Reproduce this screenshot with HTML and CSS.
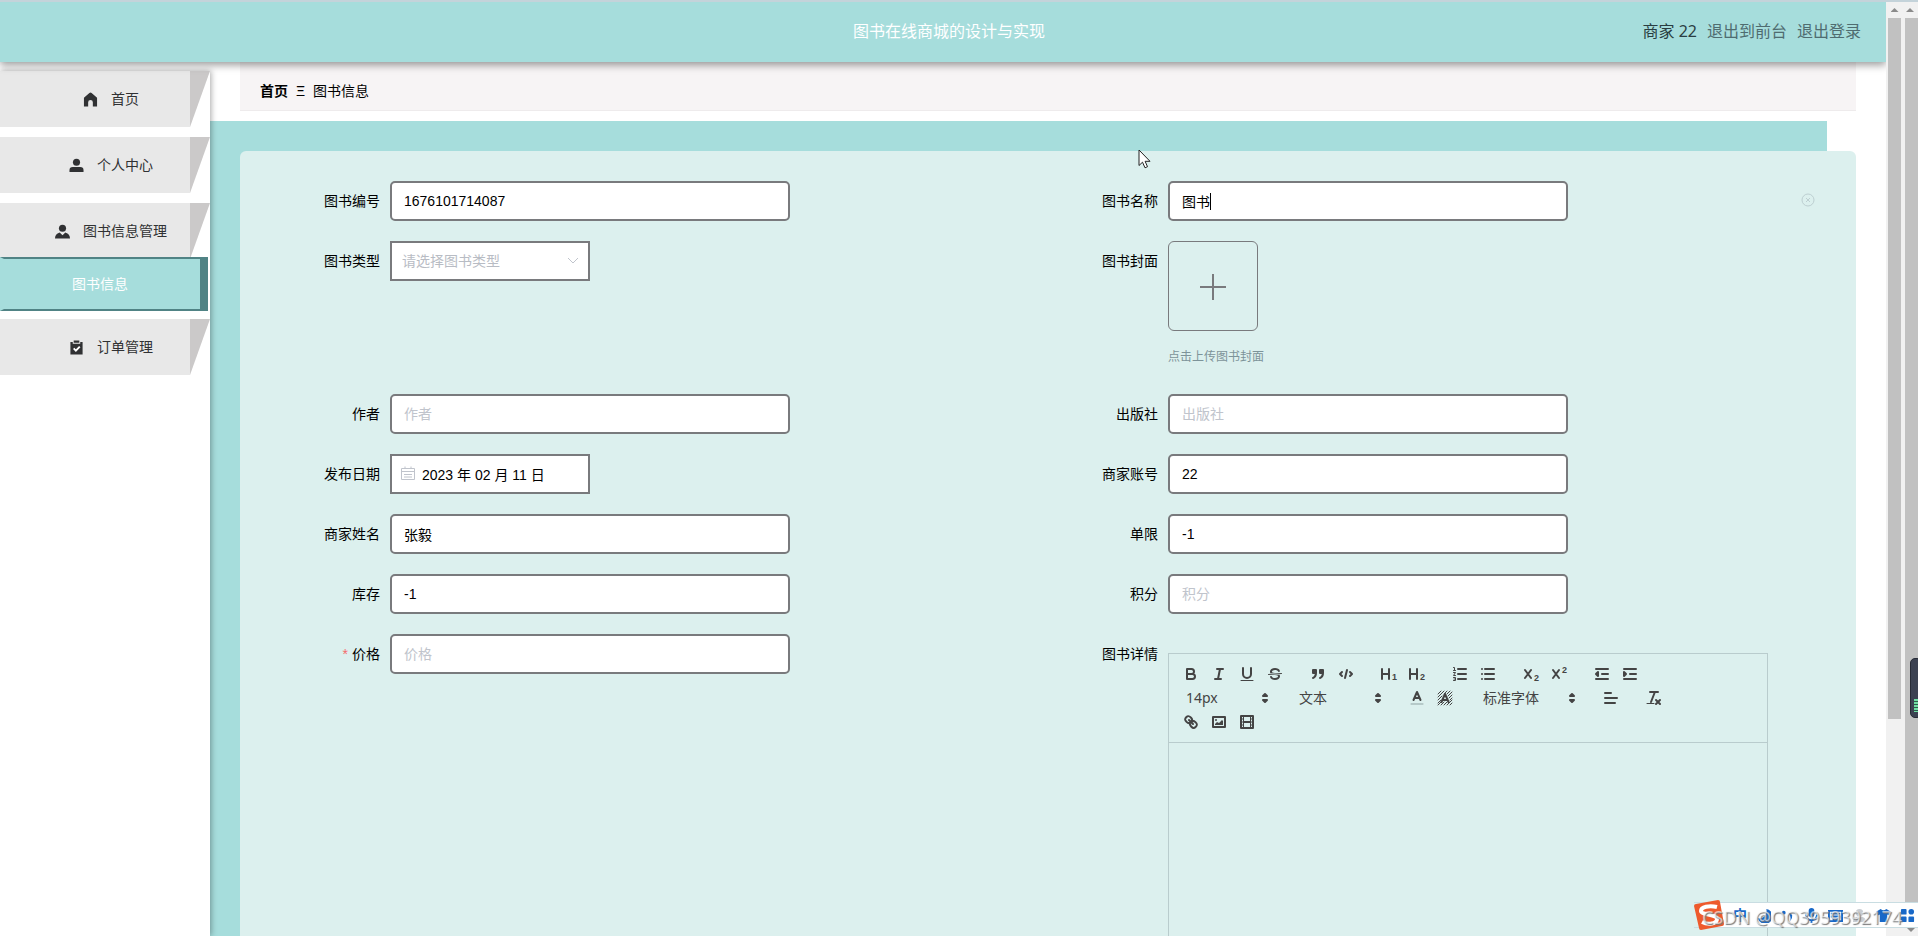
FILE: index.html
```html
<!DOCTYPE html>
<html lang="zh-CN">
<head>
<meta charset="utf-8">
<title>图书在线商城的设计与实现</title>
<link rel="stylesheet" href="styles.css">
</head>
<body>
<div class="app">
  <header class="topbar">
    <h1 class="topbar-title">图书在线商城的设计与实现</h1>
    <div class="topbar-user">
      <span class="user-name">商家 22</span>
      <a class="user-link" href="#">退出到前台</a>
      <a class="user-link" href="#">退出登录</a>
    </div>
  </header>
  <div class="body">
    <nav class="sidebar">
      <a class="menu-item" href="#"><span class="menu-label"><svg class="menu-icon" viewBox="0 0 16 16"><path d="M8 .5q-.6 0-1.200.5L1 6v9.500h4.500V11a2.500 2.500 0 0 1 5 0v4.500H15V6L9.200 1Q8.600.5 8 .5z"/></svg>首页</span></a>
      <a class="menu-item" href="#"><span class="menu-label"><svg class="menu-icon" viewBox="0 0 16 16"><circle cx="8" cy="4.500" r="3.800"/><path d="M.5 15v-2A3.500 3.500 0 0 1 4 9.500h8a3.500 3.500 0 0 1 3.500 3.500v2z"/></svg>个人中心</span></a>
      <div class="menu-group">
        <a class="menu-item" href="#"><span class="menu-label"><svg class="menu-icon" viewBox="0 0 16 16"><circle cx="8" cy="4.500" r="3.800"/><path d="M0 15.500c0-3.500 1.500-5.500 5-6.500l3 3 3-3c3.500 1 5 3 5 6.500z"/></svg>图书信息管理</span></a>
        <a class="submenu-item" href="#">图书信息</a>
      </div>
      <a class="menu-item" href="#"><span class="menu-label"><svg class="menu-icon" viewBox="0 0 16 16"><path d="M1.500 2H4v2h8V2h2.500v13.500h-13z"/><path d="M5 .5h6V3H5z"/><path class="icon-check" d="m5 9 2.300 2.300L11.500 7"/></svg>订单管理</span></a>
    </nav>
    <main class="main">
      <div class="crumbs"><a class="crumb-home" href="#">首页</a><span>Ξ</span><span>图书信息</span></div>
      <div class="backdrop">
        <form class="panel">
          <div class="field"><label for="no">图书编号</label><input class="box" id="no" value="1676101714087"></div>
          <div class="field"><label for="name">图书名称</label><div class="caret-wrap"><input class="box" id="name" value="图书"><span class="caret"></span></div>
            <svg class="clear-icon" viewBox="0 0 14 14"><circle cx="7" cy="7" r="6"/><path d="m5 5 4 4M9 5 5 9"/></svg>
          </div>
          <div class="field"><label for="kind">图书类型</label>
            <div class="select-wrap"><select class="box box-short box-select" id="kind"><option>请选择图书类型</option></select>
            <svg class="chevron" viewBox="0 0 12 12"><path d="m1 3 5 5 5-5"/></svg></div>
          </div>
          <div class="field"><label for="cover">图书封面</label>
            <div class="cover"><button class="cover-add" id="cover" type="button" aria-label="图书封面"><svg class="plus" viewBox="0 0 28 28"><path d="M14 1v26M1 14h26"/></svg></button><p class="cover-tip">点击上传图书封面</p></div>
          </div>
          <div class="field"><label for="author">作者</label><input class="box" id="author" placeholder="作者"></div>
          <div class="field"><label for="press">出版社</label><input class="box" id="press" placeholder="出版社"></div>
          <div class="field"><label for="date">发布日期</label>
            <div class="select-wrap"><input class="box box-short box-date" id="date" value="2023 年 02 月 11 日">
            <svg class="calendar" viewBox="0 0 14 14"><path d="M.5 2.500h13v11H.5zM.5 5.500h13M4 .5V3M10 .5V3M3 8.500h8M3 11h8"/></svg></div>
          </div>
          <div class="field"><label for="account">商家账号</label><input class="box" id="account" value="22"></div>
          <div class="field"><label for="owner">商家姓名</label><input class="box" id="owner" value="张毅"></div>
          <div class="field"><label for="limit">单限</label><input class="box" id="limit" value="-1"></div>
          <div class="field"><label for="stock">库存</label><input class="box" id="stock" value="-1"></div>
          <div class="field"><label for="points">积分</label><input class="box" id="points" placeholder="积分"></div>
          <div class="field"><label for="price"><span class="required">*</span>价格</label><input class="box" id="price" placeholder="价格"></div>
          <div class="field"><label for="detail">图书详情</label>
            <div class="editor">
              <div class="toolbar">
                <div class="formats">
                  <button type="button" aria-label="粗体"><svg viewBox="0 0 18 18"><path d="M5 4h4.500a2.500 2.500 0 0 1 0 5H5zM5 9h5.500a2.500 2.500 0 0 1 0 5H5z"/></svg></button>
                  <button type="button" aria-label="斜体"><svg viewBox="0 0 18 18"><path d="M7 4h6M5 14h6M8 14l2-10"/></svg></button>
                  <button type="button" aria-label="下划线"><svg viewBox="0 0 18 18"><path d="M5 3v6a4 4 0 0 0 8 0V3"/><path class="thin" d="M3 15.500h12"/></svg></button>
                  <button type="button" aria-label="删除线"><svg viewBox="0 0 18 18"><path class="thin" d="m15.500 8.500-13 1"/><path class="solid" d="M9.007 8C6.542 7.791 6 7.519 6 6.500 6 5.792 7.283 5 9 5c1.571 0 2.765.679 2.969 1.309a1 1 0 0 0 1.900-.617C13.356 4.106 11.354 3 9 3 6.200 3 4 4.538 4 6.500a3.200 3.200 0 0 0 .5 1.843zM8.984 10C11.457 10.208 12 10.479 12 11.500c0 .708-1.283 1.500-3 1.500-1.571 0-2.765-.679-2.969-1.309a1 1 0 1 0-1.900.617C4.644 13.894 6.646 15 9 15c2.800 0 5-1.538 5-3.500a3.200 3.200 0 0 0-.5-1.843z"/></svg></button>
                </div>
                <div class="formats">
                  <button type="button" aria-label="引用"><svg viewBox="0 0 18 18"><path class="filled" d="M4 5h3v3H4zM11 5h3v3h-3zM7 8c0 4-3 5-3 5M14 8c0 4-3 5-3 5"/></svg></button>
                  <button type="button" aria-label="代码"><svg viewBox="0 0 18 18"><path d="M5 7 3 9l2 2M13 7l2 2-2 2M10 5 8 13"/></svg></button>
                </div>
                <div class="formats">
                  <button type="button" aria-label="标题一"><svg viewBox="0 0 18 18"><path d="M2 4v10M9 4v10M2 9h7"/><text x="12" y="15">1</text></svg></button>
                  <button type="button" aria-label="标题二"><svg viewBox="0 0 18 18"><path d="M2 4v10M9 4v10M2 9h7"/><text x="12" y="15">2</text></svg></button>
                </div>
                <div class="formats">
                  <button type="button" aria-label="有序列表"><svg viewBox="0 0 18 18"><path d="M7 4h8M7 9h8M7 14h8"/><path class="thin" d="M2.500 2.500h1v3M2.500 5.500h2M2.500 7.500h2l-2 3h2M2.500 12.500h2v3h-2M3 14h1.500"/></svg></button>
                  <button type="button" aria-label="无序列表"><svg viewBox="0 0 18 18"><path d="M6 4h9M6 9h9M6 14h9M3 4h0M3 9h0M3 14h0"/></svg></button>
                </div>
                <div class="formats">
                  <button type="button" aria-label="下标"><svg viewBox="0 0 18 18"><path d="m3 5 6 8M9 5l-6 8"/><text x="12" y="16">2</text></svg></button>
                  <button type="button" aria-label="上标"><svg viewBox="0 0 18 18"><path d="m3 5 6 8M9 5l-6 8"/><text x="12" y="8">2</text></svg></button>
                </div>
                <div class="formats">
                  <button type="button" aria-label="减少缩进"><svg viewBox="0 0 18 18"><path d="M3 14h12M3 4h12M9 9h6"/><path class="filled" d="M5 7v4L3 9z"/></svg></button>
                  <button type="button" aria-label="增加缩进"><svg viewBox="0 0 18 18"><path d="M3 14h12M3 4h12M9 9h6"/><path class="filled" d="M3 7v4l2-2z"/></svg></button>
                </div>
                <div class="formats picker"><select aria-label="字号"><option>14px</option></select><svg viewBox="0 0 18 18"><path class="filled" d="m7 11 2 2 2-2zM7 7l2-2 2 2z"/></svg></div>
                <div class="formats picker"><select aria-label="段落"><option>文本</option></select><svg viewBox="0 0 18 18"><path class="filled" d="m7 11 2 2 2-2zM7 7l2-2 2 2z"/></svg></div>
                <div class="formats">
                  <button type="button" aria-label="字体颜色"><svg viewBox="0 0 18 18"><path class="soft" d="M3 15h12"/><path d="M5.500 11 9 3l3.500 8M11.600 9H6.400"/></svg></button>
                  <button type="button" aria-label="背景颜色"><svg viewBox="0 0 18 18"><path class="thin" d="m2 5 3-3M2 8l6-6M2 11l4-4M8 5l3-3M2 14l3-3M2 16l3-3M11 5l3-3M12 7l4-4M13 9l3-3M14 11l2-2M5 16l3-3M8 16l3-3M11 16l5-5M14 16l2-2"/><path d="m5.500 13 3.500-8 3.500 8M11.600 11H6.400"/></svg></button>
                </div>
                <div class="formats picker picker-wide"><select aria-label="字体"><option>标准字体</option></select><svg viewBox="0 0 18 18"><path class="filled" d="m7 11 2 2 2-2zM7 7l2-2 2 2z"/></svg></div>
                <div class="formats"><button type="button" aria-label="对齐"><svg viewBox="0 0 18 18"><path d="M3 9h12M3 14h10M3 4h6"/></svg></button></div>
                <div class="formats"><button type="button" aria-label="清除格式"><svg viewBox="0 0 18 18"><path d="M5 3h8M6 13 9.500 4M11 11l4 4M15 11l-4 4"/><path class="thin" d="M2 14.500h7"/></svg></button></div>
                <div class="formats">
                  <button type="button" aria-label="链接"><svg viewBox="0 0 18 18"><path d="m7 7 4 4"/><path d="M8.900 4.577a3.476 3.476 0 0 1 .36 4.679A3.476 3.476 0 0 1 4.577 8.900C3.185 7.500 2.035 6.400 4.217 4.217S7.500 3.185 8.900 4.577zM13.423 9.100a3.476 3.476 0 0 0-4.679-.36 3.476 3.476 0 0 0 .36 4.679c1.392 1.392 2.500 2.542 4.679.36s1.032-3.287-.36-4.679z"/></svg></button>
                  <button type="button" aria-label="图片"><svg viewBox="0 0 18 18"><path d="M3 4h12v10H3z"/><circle class="solid" cx="6" cy="7" r="1"/><path class="solid" d="M5 12v-1l2-2 2 1 3-3 1 1v4z"/></svg></button>
                  <button type="button" aria-label="视频"><svg viewBox="0 0 18 18"><path d="M3 3h12v12H3zM6 9h6"/><path class="thin" d="M5.500 3v12M12.500 3v12M3 6h2.500M3 9h2.500M3 12h2.500M12.500 6H15M12.500 9H15M12.500 12H15"/></svg></button>
                </div>
              </div>
              <textarea class="editor-text" id="detail"></textarea>
            </div>
          </div>
        </form>
      </div>
    </main>
  </div>
</div>
<div class="rail rail-inner"><span class="rail-up"></span><span class="thumb thumb-inner"></span></div>
<div class="rail rail-outer"><span class="rail-up"></span><span class="thumb"></span><span class="rail-down"></span></div>

<svg class="pointer" viewBox="0 0 13 20"><path d="M1 1v15.500l3.500-3.300 2.500 5.600 2.500-1.100-2.400-5.400H12z"/></svg>
<div class="gauge"><span class="gauge-level"></span></div>
<div class="ime">
  <svg class="ime-logo" viewBox="0 0 30 30"><path class="logo-tile" d="M2 4 24 0q2 0 2 2l4 22q0 2-2 2L7 30q-2 0-2-2L0 6q0-2 2-2z"/><path class="logo-curve" d="M23 7C15 5 7 7 7 11s16 3 16 8-9 6-15 3"/></svg>
  <span class="ime-mode">中</span>
  <svg viewBox="0 0 16 16"><path d="M11 1a8 8 0 1 1-9 10A8 8 0 0 0 11 1z"/></svg>
  <svg viewBox="0 0 16 16"><circle cx="4" cy="5" r="2"/><path d="M9 5q7 1 2 9 1-5-2-9z"/></svg>
  <svg viewBox="0 0 16 16"><rect x="5" y="0" width="6" height="10" rx="3"/><path class="ime-line" d="M2 7q1 6 6 6t6-6M8 13v3"/></svg>
  <svg viewBox="0 0 16 16"><path class="ime-line" d="M1 3h14v11H1zM3 6h10M3 9h10M5 12h6"/></svg>
  <svg class="ime-muted" viewBox="0 0 16 16"><circle cx="8" cy="5" r="4"/><path d="M1 15q0-6 7-6t7 6z"/></svg>
  <svg viewBox="0 0 16 16"><path d="m0 4 5-3q3 3 6 0l5 3-2 4-2-1v8H4V7L2 8z"/></svg>
  <svg viewBox="0 0 16 16"><rect x="1" y="1" width="6" height="6" rx="1"/><rect x="9" y="1" width="6" height="6" rx="3"/><rect x="1" y="9" width="6" height="6" rx="1"/><rect x="9" y="9" width="6" height="6" rx="1"/></svg>
</div>
<div class="watermark">CSDN @QQ3959392174</div>
</body>
</html>
```
FILE: styles.css
```css
* { box-sizing: border-box; }
body {
  margin: 0;
  height: 100vh;
  display: flex;
  overflow: hidden;
  position: relative;
  background: #fff;
  border-top: 2px solid #c4d3da;
  font: 14px/20px "Liberation Sans", "Noto Sans CJK SC", sans-serif;
  color: #000;
}
a { color: inherit; text-decoration: none; }
button, input, select, textarea { font: inherit; color: inherit; }

.app { flex: 1; min-width: 0; display: flex; flex-direction: column; }
.topbar {
  position: relative;
  z-index: 2;
  flex: none;
  height: 60px;
  display: flex;
  align-items: center;
  justify-content: flex-end;
  padding: 0 25px 3px;
  background: #a6dddc;
  box-shadow: 0 3px 8px rgba(0, 0, 0, .4);
  font-size: 16px;
  font-family: "Noto Sans", "Noto Sans CJK SC", sans-serif;
}
.topbar-title {
  position: absolute;
  left: 0;
  right: 12px;
  margin: 0;
  padding-left: 24px;
  text-align: center;
  font-size: 16px;
  font-weight: 400;
  color: #fff;
}
.topbar-user { position: relative; display: flex; gap: 10px; color: #2a3d42; }
.user-link { color: #4f6c70; }

.body { flex: 1; min-height: 0; display: flex; }
.sidebar {
  position: relative;
  z-index: 1;
  flex: none;
  width: 210px;
  margin-top: 9px;
  display: flex;
  flex-direction: column;
  gap: 10px;
  background: #fff;
  box-shadow: 1px 0 6px rgba(0, 0, 0, .35);
  color: #303133;
}
.menu-item {
  display: block;
  height: 56px;
  background: #cbc9c9;
  clip-path: polygon(0 0, 100% 0, 190px 100%, 0 100%);
}
.menu-label {
  width: 190px;
  height: 100%;
  padding-left: 32px;
  display: flex;
  align-items: center;
  justify-content: center;
  gap: 13px;
  background: #e8e8e8;
}
.menu-icon { width: 15px; height: 15px; fill: #303133; }
.icon-check { fill: none; stroke: #fff; stroke-width: 2; }
.menu-group { margin-bottom: -2px; }
.submenu-item {
  position: relative;
  display: flex;
  align-items: center;
  justify-content: center;
  height: 54px;
  width: 208px;
  padding-right: 4px;
  margin-top: -2px;
  background: #a6dddc;
  border: solid #508385;
  border-width: 2px 8px 2px 4px;
  border-left-color: #a6dddc;
  color: #fff;
}

.main { flex: 1; min-width: 0; display: flex; flex-direction: column; overflow: hidden; }
.crumbs {
  flex: none;
  height: 49px;
  margin: 0 30px 10px;
  padding: 9px 20px 0;
  display: flex;
  align-items: center;
  gap: 8px;
  background: #f7f4f5;
  border-bottom: 1px solid #eeebec;
}
.crumb-home { font-weight: 700; }
.backdrop { flex: 1; min-height: 0; margin-right: 59px; padding-top: 30px; background: #a6dddc; }
.panel {
  margin: 0 -29px 0 30px;
  padding: 30px;
  display: grid;
  grid-template-columns: 1fr 1fr;
  row-gap: 20px;
  align-items: start;
  background: #dcf0ee;
  border-radius: 6px;
}
.field { position: relative; display: flex; align-items: flex-start; }
.field > label { flex: none; width: 120px; padding-right: 10px; line-height: 40px; text-align: right; }
.required { margin-right: 4px; color: #f56c6c; }
.box {
  display: block;
  width: 400px;
  height: 40px;
  padding: 0 12px;
  border: 2px solid #797a7d;
  border-radius: 5px;
  background: #fff;
  outline: 0;
}
.box::placeholder { color: #c0c4cc; }
.box-short { width: 200px; border-radius: 0; }
.box-select { padding: 0 10px; appearance: none; color: #b8bcc4; }
.box-date { padding-left: 30px; }
.select-wrap, .caret-wrap { position: relative; }
.caret { position: absolute; left: 42px; top: 12px; width: 1px; height: 17px; background: #000; }
.chevron { position: absolute; right: 11px; top: 14px; width: 12px; height: 12px; fill: none; stroke: #c0c4cc; }
.calendar { position: absolute; left: 11px; top: 12px; width: 14px; height: 14px; fill: none; stroke: #c0c4cc; }
.clear-icon { position: absolute; right: 11px; top: 12px; width: 14px; height: 14px; fill: none; stroke: #bdcfd1; }
.cover { height: 133px; }
.cover-add {
  display: flex;
  align-items: center;
  justify-content: center;
  width: 90px;
  height: 90px;
  padding: 2px 0 0;
  border: 1px solid #797a7d;
  border-radius: 6px;
  background: none;
}
.plus { width: 28px; height: 28px; fill: none; stroke: #797a7d; stroke-width: 2; }
.cover-tip { margin: 16px 0 0; font-size: 12px; color: #7d9399; }

.editor { width: 600px; margin-top: 19px; border: 1px solid #b9cccd; }
.toolbar { padding: 8px; display: flex; flex-wrap: wrap; border-bottom: 1px solid #b9cccd; }
.formats { display: flex; height: 24px; margin-right: 15px; }
.formats button { width: 28px; height: 24px; padding: 3px 5px; border: 0; background: none; }
.formats svg { display: block; width: 18px; height: 18px; fill: none; stroke: #444; stroke-width: 2; stroke-linecap: round; stroke-linejoin: round; }
.formats .thin { stroke-width: 1; }
.formats .soft { stroke: #8fa3a3; stroke-width: 1; }
.formats .solid { fill: #444; stroke: none; }
.formats .filled { fill: #444; }
.formats text { fill: #444; stroke: none; font: 700 9px "Liberation Sans", sans-serif; }
.picker { position: relative; width: 98px; }
.picker-wide { width: 108px; }
.picker select { width: 100%; padding: 0 9px; border: 0; background: none; appearance: none; color: #444; font-family: "Noto Sans", "Noto Sans CJK SC", sans-serif; }
.picker svg { position: absolute; right: 1px; top: 3px; pointer-events: none; }
.editor-text { display: block; width: 100%; height: 300px; padding: 12px; border: 0; background: none; resize: none; outline: 0; }

.rail { position: relative; z-index: 3; flex: none; display: flex; flex-direction: column; align-items: center; width: 17px; background: #f1f1f1; }
.rail-outer { width: 15px; align-items: flex-end; }
.rail-up, .rail-down { flex: none; width: 8px; height: 4px; margin: 6px 4px; background: #8b8b8b; clip-path: polygon(50% 0, 100% 100%, 0 100%); }
.rail-down { margin: 5px 3px 4px; clip-path: polygon(0 0, 100% 0, 50% 100%); }
.thumb { flex: 1; width: 13px; background: #c1c1c1; }
.thumb-inner { flex: 0 0 75%; }

.pointer { position: absolute; z-index: 4; left: 1138px; top: 147px; width: 13px; height: 20px; fill: #fff; stroke: #222; }
.gauge {
  position: absolute;
  z-index: 4;
  right: -4px;
  top: 656px;
  width: 12px;
  height: 60px;
  padding: 40px 0 0 3px;
  background: #3c4252;
  border: 1px solid #272b36;
  border-radius: 5px;
}
.gauge-level { display: block; height: 13px; background: repeating-linear-gradient(#6fe0a4 0 2px, #2f5a4c 2px 3px); }
.ime {
  position: absolute;
  z-index: 4;
  right: 0;
  bottom: 8px;
  width: 224px;
  height: 26px;
  padding: 0 3px 0 0;
  display: flex;
  align-items: center;
  justify-content: space-between;
  background: linear-gradient(90deg, transparent 24px, #fff 24px);
  border: solid #c9dde2;
  border-width: 1px 0;
}
.ime svg { width: 15px; height: 15px; fill: #1868c8; }
.ime .ime-line { fill: none; stroke: #1868c8; stroke-width: 2; }
.ime .ime-muted { fill: #c9cdd2; }
.ime .ime-logo { width: 30px; height: 30px; }
.ime-mode { font-weight: 700; color: #1868c8; }
.ime .logo-tile { fill: #ee5a2c; }
.ime .logo-curve { fill: none; stroke: #fff; stroke-width: 4; }
.watermark {
  position: absolute;
  z-index: 5;
  right: 16px;
  bottom: 7px;
  font: 18px/24px "Noto Sans", sans-serif;
  color: rgba(255, 255, 255, .6);
  text-shadow: 1px 1px 1px #777;
}
```
